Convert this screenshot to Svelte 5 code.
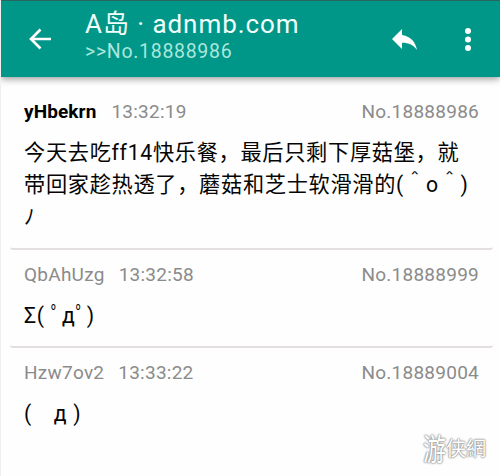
<script lang="ts">
  type Post = { id: string; time: string; no: string; lines: string[]; po?: boolean };

  const posts: Post[] = [
    {
      id: "yHbekrn",
      time: "13:32:19",
      no: "No.18888986",
      lines: [
        "今天去吃ff14快乐餐，最后只剩下厚菇堡，就",
        "带回家趁热透了，蘑菇和芝士软滑滑的(＾o＾)",
        "ﾉ",
      ],
      po: true,
    },
    { id: "QbAhUzg", time: "13:32:58", no: "No.18888999", lines: ["Σ( ﾟдﾟ)"] },
    { id: "Hzw7ov2", time: "13:33:22", no: "No.18889004", lines: ["(　д )"] },
  ];
</script>

<div class="screen">
  <header>
    <svg class="back" viewBox="0 0 22 22">
      <path d="M22 11H2M11.500 1.500L2 11l9.500 9.500" />
    </svg>
    <div class="titles">
      <h1>A岛 · adnmb.com</h1>
      <p>&gt;&gt;No.18888986</p>
    </div>
    <svg class="reply" viewBox="0 0 25 21">
      <path d="M10 6V0L0 10l10 10v-6.200c7 0 11.500 2.200 15 7.200C23.500 13.500 19.500 7.400 10 6z" />
    </svg>
    <svg class="more" viewBox="0 0 6 23">
      <circle cx="3" cy="3" r="3" />
      <circle cx="3" cy="11.500" r="3" />
      <circle cx="3" cy="20" r="3" />
    </svg>
  </header>

  <main>
    {#each posts as post}
      <article>
        <div class="meta">
          <span class="id" class:po={post.po}>{post.id}</span>
          <span class="time">{post.time}</span>
          <span class="no">{post.no}</span>
        </div>
        <div class="content">
          {#each post.lines as line}
            <p>{line}</p>
          {/each}
        </div>
      </article>
    {/each}
  </main>

  <div class="watermark"><span class="big">游</span><span>侠</span><span>網</span></div>
</div>

<style>
  .screen {
    position: relative;
    box-sizing: border-box;
    height: 476px;
    overflow: hidden;
    background: #fefefe;
    border-left: 1px solid #f0f0f0;
    font-family: Roboto, "Noto Sans CJK SC", sans-serif;
  }

  header {
    display: flex;
    align-items: center;
    box-sizing: border-box;
    height: 77px;
    padding: 0 29px 0 28px;
    background: #009688;
    border-top: 1px solid #29665f;
    box-shadow: 0 2px 7px rgba(0, 0, 0, 0.4);
  }

  svg {
    flex: none;
    display: block;
    fill: #fff;
  }

  .back {
    width: 22px;
    height: 22px;
    fill: none;
    stroke: #fff;
    stroke-width: 2.7;
  }

  .titles {
    flex: 1;
    margin-left: 34px;
    padding-bottom: 5px;
    white-space: nowrap;
  }

  h1,
  p {
    margin: 0;
    font-weight: 400;
  }

  h1 {
    height: 30px;
    color: #f2fffc;
    font-size: 26px;
    line-height: 30px;
    letter-spacing: 0.95px;
  }

  .titles p {
    height: 26px;
    color: #aae7dc;
    font-size: 19.5px;
    line-height: 26px;
    letter-spacing: 0.7px;
  }

  .reply {
    width: 25px;
    height: 21px;
    margin-right: 48px;
  }

  .more {
    width: 6px;
    height: 23px;
  }

  main {
    padding: 21px 7px 0 9px;
  }

  article {
    box-sizing: border-box;
    padding: 0 14px 0 14px;
    margin-bottom: 11px;
    border-bottom: 2px solid #e3dfdf;
    border-radius: 0 0 3px 3px;
  }

  article:last-child {
    border-bottom: 0;
  }

  .meta {
    display: flex;
    height: 27px;
    color: #8b8b8b;
    font-size: 19px;
    line-height: 27px;
    letter-spacing: 0.25px;
  }

  .id {
    margin-right: 14px;
  }

  .po {
    margin-right: 15px;
    color: #000;
    font-weight: 700;
    letter-spacing: 0.1px;
  }

  .no {
    margin-left: auto;
  }

  .content {
    padding: 12px 0 14.5px;
    color: #050505;
    font-size: 21.2px;
    letter-spacing: 0.7px;
    white-space: pre;
  }

  .content p {
    height: 32px;
    line-height: 32px;
  }

  .watermark {
    position: absolute;
    right: 14px;
    bottom: 12px;
    display: flex;
    align-items: center;
    height: 34px;
    color: #fff;
    font-size: 20px;
    text-shadow: 0 0 1px #888, 0 0 2px #888, 0 0 2px #aaa;
  }

  .big {
    font-size: 23px;
    transform: scaleY(1.3);
  }
</style>
